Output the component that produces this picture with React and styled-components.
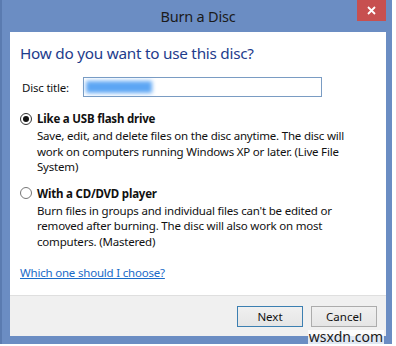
import styled, { createGlobalStyle } from 'styled-components'

const Global = createGlobalStyle`
  body {
    margin: 0;
    background: #ffffff;
    font-family: "Noto Sans", "Open Sans", sans-serif;
  }
`

const Frame = styled.div`
  position: relative;
  width: 392px;
  height: 344px;
  box-sizing: border-box;
  background: #6b8dc3;
  border-left: 2px solid #5a7bb0;
  padding: 0 6px 8px 8px;
  display: flex;
  flex-direction: column;
`

const TitleBar = styled.div`
  height: 32px;
  display: flex;
  align-items: flex-start;
  justify-content: center;
  position: relative;
`

const Caption = styled.div`
  margin-top: 6px;
  font-size: 14.5px;
  color: #1b1b1b;
  letter-spacing: -0.2px;
`

const CloseButton = styled.div`
  position: absolute;
  top: 0;
  right: 0;
  width: 29px;
  height: 21px;
  background: #c75050;
  color: #ffffff;
  display: flex;
  align-items: center;
  justify-content: center;
`

const Client = styled.div`
  flex: 1;
  display: flex;
  flex-direction: column;
  background: #ffffff;
`

const Body = styled.div`
  flex: 1;
  padding: 11px 10px 0 10px;
`

const Heading = styled.div`
  font-size: 15.3px;
  color: #1e3c8c;
  letter-spacing: -0.25px;
  line-height: 20px;
`

const Field = styled.div`
  display: flex;
  align-items: center;
  gap: 14px;
  margin: 14px 0 0 2px;
`

const Label = styled.span`
  font-size: 11.5px;
  color: #111;
  letter-spacing: -0.2px;
`

const Input = styled.div`
  width: 239px;
  height: 20px;
  box-sizing: border-box;
  border: 1px solid #7a9cc3;
  padding: 3px 2px;
  display: flex;
`

const Selection = styled.span`
  width: 66px;
  height: 12px;
  background: #5da6f4;
  filter: blur(2px);
`

const Option = styled.div`
  margin-top: ${p => p.$top}px;
`

const OptionHead = styled.div`
  display: flex;
  align-items: center;
  gap: 5px;
`

const Radio = styled.span`
  width: 12px;
  height: 12px;
  box-sizing: border-box;
  border-radius: 50%;
  border: 1px solid ${p => (p.$on ? '#333' : '#777')};
  background: #fff;
  display: flex;
  align-items: center;
  justify-content: center;
  &::after {
    content: '';
    width: 6px;
    height: 6px;
    border-radius: 50%;
    background: ${p => (p.$on ? '#111' : 'transparent')};
  }
`

const OptionTitle = styled.span`
  font-size: 11.5px;
  font-weight: bold;
  color: #111;
  letter-spacing: -0.2px;
`

const Desc = styled.div`
  margin: 2px 0 0 17px;
  font-size: 11.5px;
  line-height: 15.5px;
  color: #111;
  letter-spacing: -0.2px;
`

const HelpLink = styled.a`
  display: inline-block;
  margin-top: 16px;
  font-size: 11.5px;
  color: #1a6bc8;
  text-decoration: underline;
  letter-spacing: -0.2px;
`

const Footer = styled.div`
  height: 40px;
  background: #f0f0f0;
  border-top: 1px solid #dfdfdf;
  display: flex;
  justify-content: flex-end;
  align-items: center;
  gap: 8px;
  padding: 0 9px 0 0;
`

const Button = styled.button`
  width: 66px;
  height: 21px;
  box-sizing: border-box;
  border: 1px solid ${p => (p.$primary ? '#3c7fb1' : '#acacac')};
  background: linear-gradient(#f0f0f0, #e5e5e5);
  font-family: inherit;
  font-size: 11.5px;
  color: #111;
  padding: 0;
`

const Watermark = styled.div`
  position: absolute;
  right: 8px;
  bottom: 0;
  font-size: 14px;
  color: #1a1a1a;
  background: rgba(255, 255, 255, 0.8);
  line-height: 14px;
  padding: 0 1px;
`

function App() {
  return (
    <>
      <Global />
      <Frame>
        <TitleBar>
          <Caption>Burn a Disc</Caption>
          <CloseButton>
            <svg width="9" height="9" viewBox="0 0 9 9">
              <path d="M1 1 L8 8 M8 1 L1 8" stroke="#fff" strokeWidth="1.8" />
            </svg>
          </CloseButton>
        </TitleBar>
        <Client>
          <Body>
            <Heading>How do you want to use this disc?</Heading>
            <Field>
              <Label>Disc title:</Label>
              <Input>
                <Selection />
              </Input>
            </Field>
            <Option $top={14}>
              <OptionHead>
                <Radio $on />
                <OptionTitle>Like a USB flash drive</OptionTitle>
              </OptionHead>
              <Desc>
                Save, edit, and delete files on the disc anytime. The disc will
                <br />
                work on computers running Windows XP or later. (Live File
                <br />
                System)
              </Desc>
            </Option>
            <Option $top={11}>
              <OptionHead>
                <Radio />
                <OptionTitle>With a CD/DVD player</OptionTitle>
              </OptionHead>
              <Desc>
                Burn files in groups and individual files can't be edited or
                <br />
                removed after burning. The disc will also work on most
                <br />
                computers. (Mastered)
              </Desc>
            </Option>
            <HelpLink href="#">Which one should I choose?</HelpLink>
          </Body>
          <Footer>
            <Button $primary>Next</Button>
            <Button>Cancel</Button>
          </Footer>
        </Client>
        <Watermark>wsxdn.com</Watermark>
      </Frame>
    </>
  )
}

export default App
